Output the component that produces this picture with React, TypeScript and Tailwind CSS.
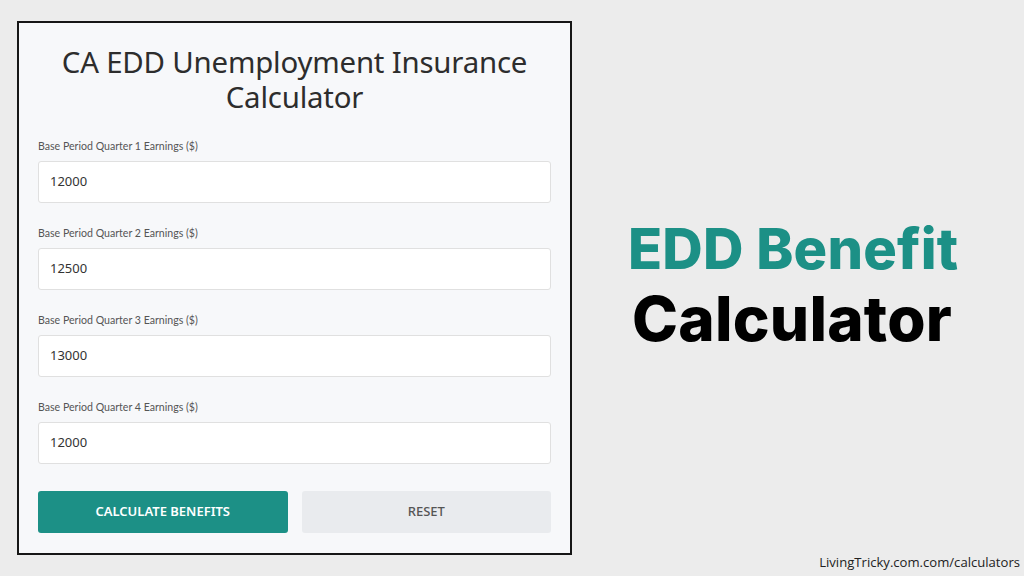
import React from "react";

const FIELDS = [
  { label: "Base Period Quarter 1 Earnings ($)", value: "12000" },
  { label: "Base Period Quarter 2 Earnings ($)", value: "12500" },
  { label: "Base Period Quarter 3 Earnings ($)", value: "13000" },
  { label: "Base Period Quarter 4 Earnings ($)", value: "12000" },
];

function Calculator() {
  return (
    <div className="ml-[17px] mt-[21px] flex h-[534px] w-[555px] flex-col border-2 border-[#161616] bg-[#f7f8fa] px-[19px] pt-[22px] font-['Noto_Sans',sans-serif]">
      <h1 className="mx-auto w-[490px] text-center text-[29.4px] leading-[35px] tracking-[-0.2px] text-[#2d2d2d]">
        CA EDD Unemployment Insurance Calculator
      </h1>

      <div className="mt-[24px] flex flex-col gap-[23px]">
        {FIELDS.map((f) => (
          <div key={f.label}>
            <label className="block font-['Lato',sans-serif] text-[10.6px] leading-[14px] text-[#555]">
              {f.label}
            </label>
            <div className="mt-[8px] flex h-[42px] items-center rounded-[3px] border border-[#e0e0e0] bg-white px-[11px] text-[13px] text-[#333]">
              {f.value}
            </div>
          </div>
        ))}
      </div>

      <div className="mt-[27px] flex gap-[14px]">
        <button className="h-[42px] flex-1 rounded-[3px] bg-[#1c9086] text-[13px] font-semibold text-white">
          CALCULATE BENEFITS
        </button>
        <button className="h-[42px] flex-1 rounded-[3px] bg-[#e9ebee] text-[13px] font-medium text-[#555]">
          RESET
        </button>
      </div>
    </div>
  );
}

export default function App() {
  return (
    <div className="relative flex h-[576px] w-[1024px] bg-[#ececec]">
      <Calculator />
      <div className="ml-[56px] mt-[218px] flex flex-col font-['Inter',sans-serif] font-extrabold">
        <span className="text-[56px] leading-[62px] tracking-[0.2px] text-[#1c9086]">EDD Benefit</span>
        <span className="pl-[4px] text-[62px] leading-[78px] tracking-[0.2px] text-black">Calculator</span>
      </div>
      <div className="absolute bottom-[3px] right-[4px] font-['Open_Sans',sans-serif] text-[13.1px] text-[#222]">
        LivingTricky.com.com/calculators
      </div>
    </div>
  );
}
